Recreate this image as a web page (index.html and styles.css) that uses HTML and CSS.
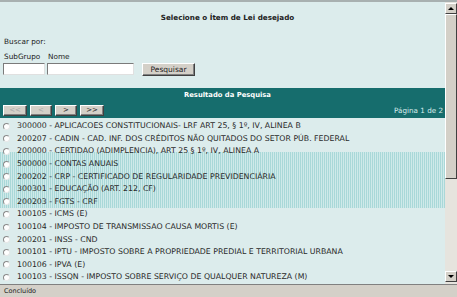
FILE: index.html
```html
<!DOCTYPE html>
<html>
<head>
<meta charset="utf-8">
<link rel="stylesheet" href="styles.css">
</head>
<body>
<div class="window">
  <div class="viewport">
    <div class="content">
      <div class="title">Selecione o Ítem de Lei desejado</div>
      <div class="search">
        <div class="label">Buscar por:</div>
        <div class="fields">
          <div class="field">
            <div class="flabel">SubGrupo</div>
            <div class="input sub"></div>
          </div>
          <div class="field">
            <div class="flabel">Nome</div>
            <div class="input nome"></div>
          </div>
          <div class="btn search-btn">Pesquisar</div>
        </div>
      </div>
      <div class="result">
        <div class="rhead">Resultado da Pesquisa</div>
        <div class="pager">
          <div class="pbtns">
            <div class="btn pbtn dis w1">&lt;&lt;</div>
            <div class="btn pbtn dis w2">&lt;</div>
            <div class="btn pbtn w2">&gt;</div>
            <div class="btn pbtn w1">&gt;&gt;</div>
          </div>
          <div class="pinfo">Página 1 de 2</div>
        </div>
        <div class="list">
          <div class="row"><span class="radio"></span>300000 - APLICACOES CONSTITUCIONAIS- LRF ART 25, § 1º, IV, ALINEA B</div>
          <div class="row"><span class="radio"></span>200207 - CADIN - CAD. INF. DOS CRÉDITOS NÃO QUITADOS DO SETOR PÚB. FEDERAL</div>
          <div class="row"><span class="radio"></span>200000 - CERTIDAO (ADIMPLENCIA), ART 25 § 1º, IV, ALINEA A</div>
          <div class="stripe">
            <div class="row"><span class="radio"></span>500000 - CONTAS ANUAIS</div>
            <div class="row"><span class="radio"></span>200202 - CRP - CERTIFICADO DE REGULARIDADE PREVIDENCIÁRIA</div>
            <div class="row"><span class="radio"></span>300301 - EDUCAÇÃO (ART. 212, CF)</div>
            <div class="row"><span class="radio"></span>200203 - FGTS - CRF</div>
          </div>
          <div class="row"><span class="radio"></span>100105 - ICMS (E)</div>
          <div class="row"><span class="radio"></span>100104 - IMPOSTO DE TRANSMISSAO CAUSA MORTIS (E)</div>
          <div class="row"><span class="radio"></span>200201 - INSS - CND</div>
          <div class="row"><span class="radio"></span>100101 - IPTU - IMPOSTO SOBRE A PROPRIEDADE PREDIAL E TERRITORIAL URBANA</div>
          <div class="row"><span class="radio"></span>100106 - IPVA (E)</div>
          <div class="row"><span class="radio"></span>100103 - ISSQN - IMPOSTO SOBRE SERVIÇO DE QUALQUER NATUREZA (M)</div>
        </div>
      </div>
    </div>
    <div class="scrollbar">
      <div class="sbtn up"><span class="tri-up"></span></div>
      <div class="thumb"></div>
      <div class="track"></div>
      <div class="sbtn down"><span class="tri-down"></span></div>
    </div>
  </div>
  <div class="status">Concluído</div>
</div>
</body>
</html>
```
FILE: styles.css
```css
* { box-sizing: border-box; }
html, body { margin: 0; padding: 0; }
body {
  width: 457px;
  height: 297px;
  overflow: hidden;
  font-family: "DejaVu Sans", Verdana, sans-serif;
  font-size: 7.3px;
  color: #222;
  background: #d4d0c8;
}
.window {
  display: flex;
  flex-direction: column;
  height: 297px;
}
.viewport {
  display: flex;
  height: 284px;
  border-top: 2px solid #a8b0b0;
  background: #dcecec;
}
.content {
  flex: 1;
  overflow: hidden;
}
.title {
  text-align: center;
  font-weight: bold;
  font-size: 7.2px;
  padding-top: 11px;
  height: 35px;
  padding-left: 10px;
}
.search { padding-left: 4px; }
.label { height: 16px; line-height: 10px; }
.fields { display: flex; align-items: flex-end; gap: 3px; }
.field { display: flex; flex-direction: column; }
.flabel { height: 10px; line-height: 8px; margin-bottom: 0; }
.input {
  height: 12px;
  background: #fff;
  border: 1px solid;
  border-color: #7a7a7a #e0e0e0 #e0e0e0 #7a7a7a;
}
.input.sub { width: 42px; margin-left: -1px; }
.input.nome { width: 87px; margin-left: -1px; }
.btn {
  background: #d4d0c8;
  border: 1px solid;
  border-color: #fff #404040 #404040 #fff;
  box-shadow: inset -1px -1px 0 #808080;
  text-align: center;
  color: #222;
}
.search-btn {
  margin-left: 5px;
  width: 53px;
  height: 13px;
  line-height: 11px;
  font-size: 7.5px;
  margin-bottom: -1px;
}
.result { margin-top: 13px; }
.rhead {
  background: #166d6d;
  color: #fff;
  font-weight: bold;
  font-size: 6.8px;
  text-align: center;
  height: 15px;
  line-height: 15px;
  padding-left: 10px;
}
.pager {
  background: #166d6d;
  height: 15px;
  display: flex;
  justify-content: space-between;
  align-items: center;
  padding: 0 2px 0 3px;
}
.pbtns { display: flex; gap: 3px; }
.pbtn { height: 11px; line-height: 9px; font-size: 7px; }
.pbtn.w1 { width: 24px; }
.pbtn.w2 { width: 22px; }
.pbtn.dis { color: #a8a8a8; }
.pinfo { color: #d8ecec; font-size: 7.2px; }
.list { padding-top: 2px; font-size: 7.8px; color: #2a2a2a; }
.row {
  height: 12.6px;
  line-height: 12px;
  display: flex;
  align-items: center;
  padding-left: 3px;
  white-space: nowrap;
}
.radio {
  width: 7px;
  height: 7px;
  border-radius: 50%;
  background: #fff;
  border: 1px solid #8a8a8a;
  border-right-color: #e8e8e8;
  border-bottom-color: #e8e8e8;
  margin-right: 7px;
  flex: none;
}
.stripe {
  background: repeating-linear-gradient(90deg, #a9d8d8 0 1px, #cfe9e9 1px 2px);
  margin-top: -6px;
  padding-top: 6px;
}
.scrollbar {
  width: 12px;
  display: flex;
  flex-direction: column;
  background: #e6e4de;
  padding-top: 1px;
}
.sbtn {
  height: 11px;
  background: #d4d0c8;
  border: 1px solid;
  border-color: #fff #404040 #404040 #fff;
  display: flex;
  align-items: center;
  justify-content: center;
  flex: none;
}
.tri-up {
  width: 0; height: 0;
  border-left: 3px solid transparent;
  border-right: 3px solid transparent;
  border-bottom: 3px solid #000;
}
.tri-down {
  width: 0; height: 0;
  border-left: 3px solid transparent;
  border-right: 3px solid transparent;
  border-top: 3px solid #000;
}
.thumb {
  height: 165px;
  background: #d4d0c8;
  border: 1px solid;
  border-color: #fff #404040 #404040 #fff;
  flex: none;
}
.track { flex: 1; }
.sbtn.down { margin-bottom: 2px; }
.status {
  height: 13px;
  line-height: 12px;
  padding-left: 4px;
  font-size: 6.5px;
  border-top: 1px solid #808080;
  background: #d4d0c8;
  color: #222;
}
```
